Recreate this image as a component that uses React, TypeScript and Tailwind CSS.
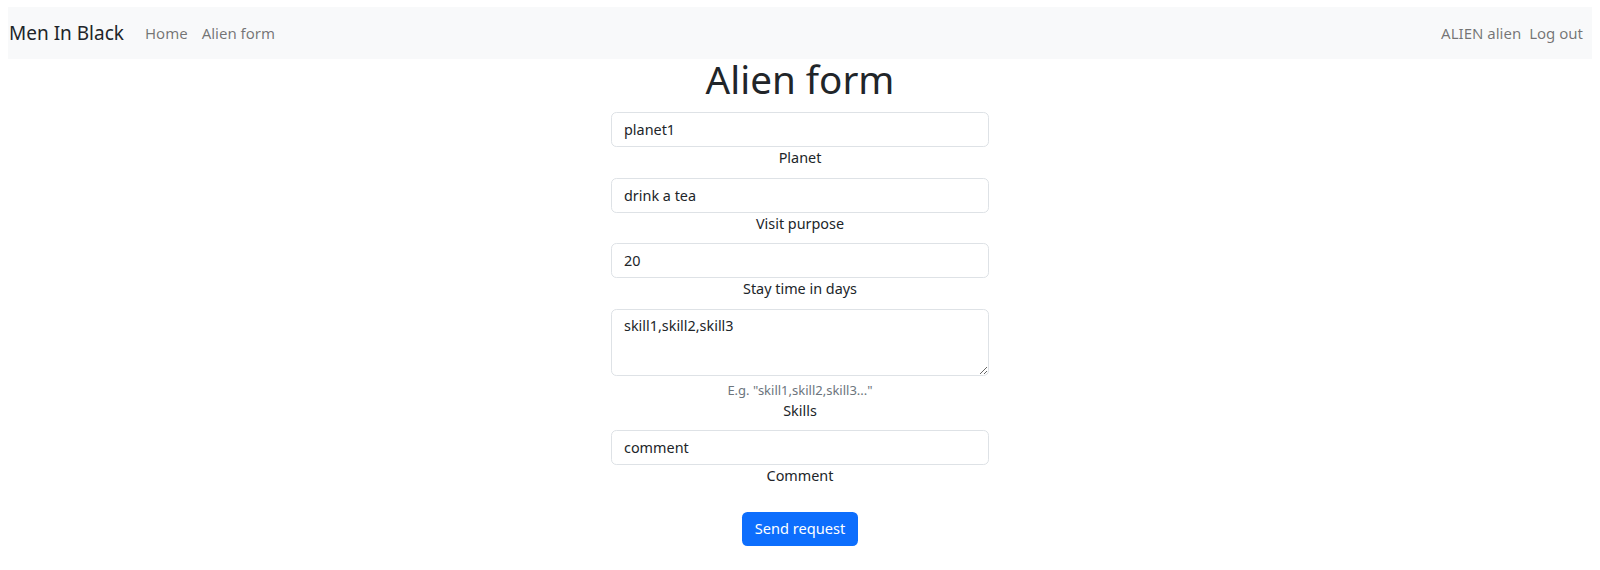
import React from "react"

const font = { fontFamily: '"Noto Sans", "Liberation Sans", sans-serif' }

function Field({ label, value, hint, area }: { label: string; value: string; hint?: string; area?: boolean }) {
  return (
    <div className="flex flex-col items-center w-full mb-[9px]">
      {area ? (
        <textarea
          defaultValue={value}
          className="w-full h-[67px] px-[12px] py-[5px] text-[14.4px] leading-[21.6px] text-[#212529] border border-[#dee2e6] rounded-[5.4px] bg-white outline-none"
        />
      ) : (
        <input
          defaultValue={value}
          className="w-full h-[35px] px-[12px] text-[14.4px] text-[#212529] border border-[#dee2e6] rounded-[5.4px] bg-white outline-none"
        />
      )}
      {hint && <div className="mt-[4px] text-[13px] leading-[20px] text-[#6c757d]">{hint}</div>}
      <label className="text-[14.4px] leading-[21.6px] text-[#212529]">{label}</label>
    </div>
  )
}

export default function App() {
  return (
    <div className="bg-white min-h-[570px] px-[8px] pt-[7px]" style={font}>
      {/* Navbar */}
      <nav className="bg-[#f8f9fa] h-[52px] flex items-center justify-between pl-[1px] pr-[9px]">
        <div className="flex items-center">
          <span className="text-[19px] text-[#212529] mr-[14px]">Men In Black</span>
          <a className="px-[7px] text-[15px] text-black/55">Home</a>
          <a className="px-[7px] text-[15px] text-black/55">Alien form</a>
        </div>
        <div className="flex items-center text-[15px] text-black/55">
          <span>ALIEN alien</span>
          <a className="pl-[8px]">Log out</a>
        </div>
      </nav>

      {/* Form */}
      <div className="flex flex-col items-center">
        <h1 className="text-[38.6px] leading-[41px] font-normal text-[#212529] mb-[12px]">Alien form</h1>
        <form className="w-[378px] flex flex-col items-center">
          <Field label="Planet" value="planet1" />
          <Field label="Visit purpose" value="drink a tea" />
          <Field label="Stay time in days" value="20" />
          <Field label="Skills" value="skill1,skill2,skill3" hint={'E.g. "skill1,skill2,skill3..."'} area />
          <Field label="Comment" value="comment" />
          <button
            type="button"
            className="mt-[16px] h-[34px] px-[13px] bg-[#0d6efd] text-white text-[14.6px] rounded-[5.4px]"
          >
            Send request
          </button>
        </form>
      </div>
    </div>
  )
}
